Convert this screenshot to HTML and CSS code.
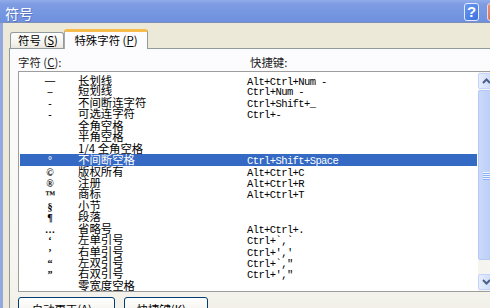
FILE: index.html
```html
<!DOCTYPE html>
<html lang="zh-CN">
<head>
<meta charset="utf-8">
<title>符号</title>
<link rel="stylesheet" href="styles.css">
</head>
<body>
<div class="window">
  <div class="titlebar">
    <span class="title">符号</span>
    <span class="tb-btn tb-help">?</span>
    <span class="tb-btn tb-close"></span>
  </div>
  <div class="client">
    <div class="tabs">
      <div class="tab">符号 (<u>S</u>)</div>
      <div class="tab active">特殊字符 (<u>P</u>)</div>
    </div>
    <div class="panel">
      <div class="labels">
        <span>字符 (<u>C</u>):</span>
        <span>快捷键:</span>
      </div>
      <div class="listbox">
        <div class="rows">
          <div class="row"><span class="sym wide">—</span><span class="name">长划线</span><span class="key">Alt+Ctrl+Num -</span></div>
          <div class="row"><span class="sym">–</span><span class="name">短划线</span><span class="key">Ctrl+Num -</span></div>
          <div class="row"><span class="sym">-</span><span class="name">不间断连字符</span><span class="key">Ctrl+Shift+_</span></div>
          <div class="row"><span class="sym">-</span><span class="name">可选连字符</span><span class="key">Ctrl+-</span></div>
          <div class="row"><span class="sym"></span><span class="name">全角空格</span><span class="key"></span></div>
          <div class="row"><span class="sym"></span><span class="name">半角空格</span><span class="key"></span></div>
          <div class="row"><span class="sym"></span><span class="name">1/4 全角空格</span><span class="key"></span></div>
          <div class="row selected"><span class="sym">°</span><span class="name">不间断空格</span><span class="key">Ctrl+Shift+Space</span></div>
          <div class="row"><span class="sym">©</span><span class="name">版权所有</span><span class="key">Alt+Ctrl+C</span></div>
          <div class="row"><span class="sym">®</span><span class="name">注册</span><span class="key">Alt+Ctrl+R</span></div>
          <div class="row"><span class="sym">™</span><span class="name">商标</span><span class="key">Alt+Ctrl+T</span></div>
          <div class="row"><span class="sym">§</span><span class="name">小节</span><span class="key"></span></div>
          <div class="row"><span class="sym">¶</span><span class="name">段落</span><span class="key"></span></div>
          <div class="row"><span class="sym">…</span><span class="name">省略号</span><span class="key">Alt+Ctrl+.</span></div>
          <div class="row"><span class="sym">‘</span><span class="name">左单引号</span><span class="key">Ctrl+`,`</span></div>
          <div class="row"><span class="sym">’</span><span class="name">右单引号</span><span class="key">Ctrl+','</span></div>
          <div class="row"><span class="sym">“</span><span class="name">左双引号</span><span class="key">Ctrl+`,"</span></div>
          <div class="row"><span class="sym">”</span><span class="name">右双引号</span><span class="key">Ctrl+',"</span></div>
          <div class="row"><span class="sym"></span><span class="name">零宽度空格</span><span class="key"></span></div>
        </div>
        <div class="scrollbar">
          <div class="sb-btn">
            <svg width="9" height="6" viewBox="0 0 9 6"><path d="M1 5 L4.5 1.5 L8 5" fill="none" stroke="#4D6185" stroke-width="2"/></svg>
          </div>
          <div class="sb-thumb"><span class="grip"></span><span class="grip"></span><span class="grip"></span><span class="grip"></span></div>
          <div class="sb-track"></div>
          <div class="sb-btn">
            <svg width="9" height="6" viewBox="0 0 9 6"><path d="M1 1 L4.5 4.5 L8 1" fill="none" stroke="#4D6185" stroke-width="2"/></svg>
          </div>
        </div>
      </div>
      <div class="buttons">
        <div class="btn btn-auto">自动更正(<u>A</u>)...</div>
        <div class="btn btn-key">快捷键(<u>K</u>)...</div>
      </div>
    </div>
  </div>
</div>
</body>
</html>
```

FILE: styles.css
```css
* { box-sizing: border-box; }
html, body {
  margin: 0;
  padding: 0;
  width: 490px;
  height: 308px;
  overflow: hidden;
  background: #ECE9D8;
}
body {
  font-family: "Noto Sans CJK SC", "Noto Sans", sans-serif;
  font-size: 11.4px;
  color: #000;
}
.window {
  width: 520px;
  height: 308px;
  display: flex;
  flex-direction: column;
}
.titlebar {
  height: 23px;
  flex: none;
  display: flex;
  align-items: flex-start;
  padding-left: 5px;
  background: linear-gradient(#92ACE9 0%, #7E9CE3 20%, #7596E1 60%, #6E90DF 100%);
  border-bottom: 1px solid #7E8FB8;
}
.title {
  color: #fff;
  font-size: 14px;
  line-height: 16px;
  margin-top: 5px;
  width: 455px;
  text-shadow: 1px 1px 0 rgba(40, 60, 140, 0.35);
}
.tb-btn {
  display: block;
  margin-top: 3px;
  height: 18px;
  border-radius: 3px;
}
.tb-help {
  width: 15px;
  margin-left: 4px;
  border: 1px solid #E4ECFB;
  background: linear-gradient(135deg, #6A9AF3, #3E70DE);
  color: #fff;
  font-family: "Liberation Sans", sans-serif;
  font-weight: bold;
  font-size: 15px;
  line-height: 16px;
  text-align: center;
}
.tb-close {
  width: 20px;
  margin-left: 8px;
  border: 1px solid #F2D9D3;
  background: linear-gradient(135deg, #E3917F, #C9604A);
}
.client {
  flex: 1;
  border-left: 3px solid #93A8DE;
  padding-left: 6px;
  display: flex;
  flex-direction: column;
}
.tabs {
  display: flex;
  align-items: flex-end;
  height: 25px;
  padding-top: 6px;
  padding-left: 1px;
  flex: none;
}
.tab {
  width: 54px;
  height: 16px;
  border: 1px solid #919B9C;
  border-bottom: none;
  border-radius: 3px 3px 0 0;
  background: linear-gradient(#FEFEFE, #F3F2EC 70%, #E8E6DD);
  line-height: 15px;
  text-align: center;
  padding-left: 2px;
}
.tab.active {
  width: 84px;
  height: 20px;
  margin-bottom: -1px;
  position: relative;
  z-index: 1;
  background: #FCFCFE;
  border-top: 3px solid #F7BC4B;
  border-left-color: #A3ABAD;
  line-height: 17px;
  padding-left: 0;
}
.panel {
  width: 505px;
  flex: 1;
  border: 1px solid #919B9C;
  background: linear-gradient(#FCFCFE, #F6F5F1 80%, #F1EFE6);
  padding: 6px 0 0 8px;
}
.labels {
  display: grid;
  grid-template-columns: 232px 1fr;
  line-height: 14px;
  height: 14px;
  margin-bottom: 2px;
  color: #222;
}
.listbox {
  width: 478px;
  height: 221px;
  border: 1px solid #9D9D9D;
  border-right-color: #7F9DB9;
  background: #fff;
  display: flex;
}
.rows {
  flex: 1;
  padding: 2px 1px 0 1px;
  overflow: hidden;
}
.row {
  display: grid;
  grid-template-columns: 58px 169px 1fr;
  height: 11.44px;
  line-height: 11.44px;
  align-items: baseline;
  white-space: pre;
}
.row.selected {
  background: #3469C4;
  color: #fff;
}
.sym {
  text-align: center;
  font-size: 10px;
  font-weight: bold;
  font-family: "Liberation Serif", serif;
  padding-left: 2px;
}
.sym.wide {
  font-size: 13px;
  font-weight: normal;
  font-family: "Noto Sans CJK SC", sans-serif;
}
.name {
  white-space: pre;
}
.key {
  font-family: "Liberation Mono", monospace;
  font-size: 10.5px;
  letter-spacing: -0.6px;
}
.scrollbar {
  width: 17px;
  flex: none;
  display: flex;
  flex-direction: column;
  background: #F5F4EF;
  padding: 1px 0;
}
.sb-btn {
  height: 16px;
  flex: none;
  border: 1px solid #C3D3FD;
  border-radius: 2px;
  background: linear-gradient(90deg, #E6EEFC, #C9D8FB);
  display: flex;
  align-items: center;
  justify-content: center;
}
.sb-thumb {
  height: 170px;
  flex: none;
  margin-top: 1px;
  border: 1px solid #B4C8F6;
  border-radius: 2px;
  background: linear-gradient(90deg, #CAD9FB, #BFD1F8 60%, #B6CBF6);
  display: flex;
  flex-direction: column;
  align-items: center;
  justify-content: center;
  gap: 1px;
}
.grip {
  width: 7px;
  height: 1px;
  background: #EEF4FE;
  box-shadow: 0 1px 0 #8CB0F8;
}
.sb-track {
  flex: 1;
}
.buttons {
  display: flex;
  gap: 9px;
  margin-top: 5px;
}
.btn {
  height: 23px;
  border: 1px solid #003C74;
  border-radius: 3px;
  background: linear-gradient(#FFFFFF, #F4F3EE 60%, #E3E0D6);
  box-shadow: inset 0 -2px 0 #D6D0C5;
  text-align: center;
  line-height: 20px;
  padding-top: 1px;
}
.btn-auto { width: 97px; }
.btn-key { width: 84px; }
```
